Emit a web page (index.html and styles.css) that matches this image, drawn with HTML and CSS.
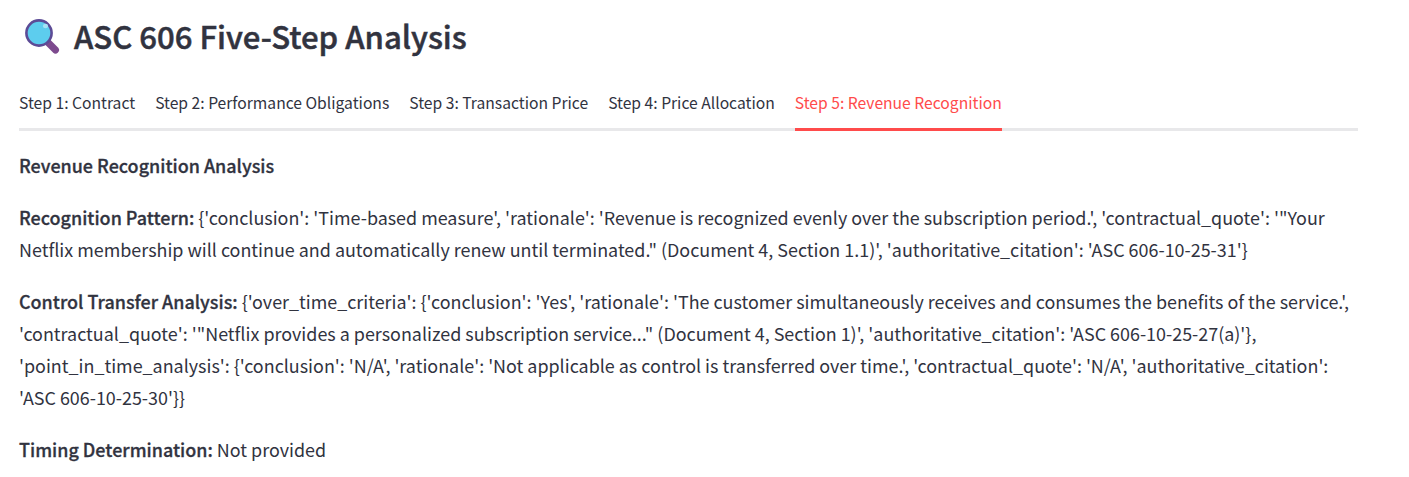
FILE: index.html
```html
<!DOCTYPE html>
<html lang="en">
<head>
    <meta charset="UTF-8">
    <title>ASC 606 Five-Step Analysis</title>
    <link rel="stylesheet" href="styles.css">
</head>
<body>
    <section class="main">
        <h1 class="title">
            <svg class="title-icon" viewBox="0 0 36 38" width="36" height="38" aria-hidden="true">
                <path d="M24.5 26 L31.5 33" stroke="#7d4a8e" stroke-width="7" stroke-linecap="round" fill="none"/>
                <circle cx="15" cy="16" r="12.6" fill="#5dcdee" stroke="#5c4b96" stroke-width="2.6"/>
                <ellipse cx="21.5" cy="9" rx="2.6" ry="2.2" fill="#a6e3f5"/>
            </svg>
            <span>ASC 606 Five-Step Analysis</span>
        </h1>
        <div class="tabs">
            <a href="#" class="tab">Step 1: Contract</a>
            <a href="#" class="tab">Step 2: Performance Obligations</a>
            <a href="#" class="tab">Step 3: Transaction Price</a>
            <a href="#" class="tab">Step 4: Price Allocation</a>
            <a href="#" class="tab active">Step 5: Revenue Recognition</a>
        </div>
        <div class="content">
            <p><b>Revenue Recognition Analysis</b></p>
            <p><b>Recognition Pattern:</b> {'conclusion': 'Time-based measure', 'rationale': 'Revenue is recognized evenly over the subscription period.', 'contractual_quote': '"Your Netflix membership will continue and automatically renew until terminated." (Document 4, Section 1.1)', 'authoritative_citation': 'ASC 606-10-25-31'}</p>
            <p><b>Control Transfer Analysis:</b> {'over_time_criteria': {'conclusion': 'Yes', 'rationale': 'The customer simultaneously receives and consumes the benefits of the service.', 'contractual_quote': '"Netflix provides a personalized subscription service..." (Document 4, Section 1)', 'authoritative_citation': 'ASC 606-10-25-27(a)'}, 'point_in_time_analysis': {'conclusion': 'N/A', 'rationale': 'Not applicable as control is transferred over time.', 'contractual_quote': 'N/A', 'authoritative_citation': 'ASC 606-10-25-30'}}</p>
            <p><b>Timing Determination:</b> Not provided</p>
        </div>
    </section>
</body>
</html>
```

FILE: styles.css
```css
* {
    margin: 0;
    padding: 0;
    box-sizing: border-box;
}
body {
    background: #fff;
    color: #31333f;
    font-family: "Noto Sans CJK SC", "Noto Sans", sans-serif;
    overflow: hidden;
}
.main {
    width: 1339px;
    margin-left: 19px;
}
.title {
    display: flex;
    align-items: center;
    gap: 14px;
    height: 72px;
    padding-left: 5px;
    font-size: 31.1px;
    font-weight: 500;
    line-height: 40px;
    -webkit-text-stroke: 0.5px #31333f;
}
.title-icon {
    flex: none;
}
.tabs {
    display: flex;
    gap: 20px;
    height: 59px;
    border-bottom: 3px solid #e8e8ea;
}
.tab {
    height: 59px;
    line-height: 62px;
    font-size: 15.66px;
    color: #31333f;
    text-decoration: none;
}
.tab.active {
    color: #ff4b4b;
    border-bottom: 3px solid #ff4b4b;
}
.content {
    padding-top: 18px;
    font-size: 17.92px;
    line-height: 32px;
}
.content p {
    margin-bottom: 20px;
}
.content b {
    font-weight: 500;
    letter-spacing: 0.02px;
    -webkit-text-stroke: 0.3px #31333f;
}
```
